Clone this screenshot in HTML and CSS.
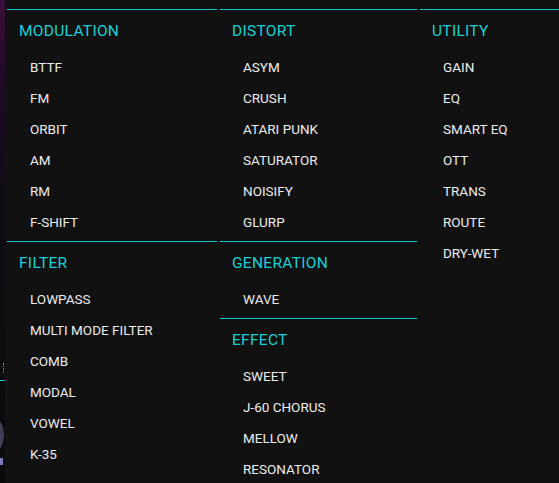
FILE: index.html
```html
<!DOCTYPE html>
<html>

<head>
  <meta http-equiv="Content-Type" content="text/html; charset=UTF-8">
  <title>Effect menu</title>
  <link rel="stylesheet" href="styles.css">
</head>

<body>

  <div id="app">

    <!-- trozo de la ventana de fondo -->
    <div id="fondo">
      <span class="puntos"></span>
      <span class="raya"></span>
      <span class="knob"></span>
      <span class="marca"></span>
    </div>

    <div id="menu">

      <div class="columna">
        <div class="seccion">
          <div class="titulo">MODULATION</div>
          <div class="item">BTTF</div>
          <div class="item">FM</div>
          <div class="item">ORBIT</div>
          <div class="item">AM</div>
          <div class="item">RM</div>
          <div class="item">F-SHIFT</div>
        </div>
        <div class="seccion">
          <div class="titulo">FILTER</div>
          <div class="item">LOWPASS</div>
          <div class="item">MULTI MODE FILTER</div>
          <div class="item">COMB</div>
          <div class="item">MODAL</div>
          <div class="item">VOWEL</div>
          <div class="item">K-35</div>
        </div>
      </div>

      <div class="columna">
        <div class="seccion">
          <div class="titulo">DISTORT</div>
          <div class="item">ASYM</div>
          <div class="item">CRUSH</div>
          <div class="item">ATARI PUNK</div>
          <div class="item">SATURATOR</div>
          <div class="item">NOISIFY</div>
          <div class="item">GLURP</div>
        </div>
        <div class="seccion">
          <div class="titulo">GENERATION</div>
          <div class="item">WAVE</div>
        </div>
        <div class="seccion">
          <div class="titulo">EFFECT</div>
          <div class="item">SWEET</div>
          <div class="item">J-60 CHORUS</div>
          <div class="item">MELLOW</div>
          <div class="item">RESONATOR</div>
        </div>
      </div>

      <div class="columna">
        <div class="seccion">
          <div class="titulo">UTILITY</div>
          <div class="item">GAIN</div>
          <div class="item">EQ</div>
          <div class="item">SMART EQ</div>
          <div class="item">OTT</div>
          <div class="item">TRANS</div>
          <div class="item">ROUTE</div>
          <div class="item">DRY-WET</div>
        </div>
      </div>

    </div>
  </div>

</body>

</html>
```

FILE: styles.css
```css
body {
  margin: 0;
  background: #111111;
  font-family: Roboto, "Liberation Sans", sans-serif;
  overflow: hidden;
}

#app {
  display: flex;
  height: 483px;
}

#fondo {
  position: relative;
  width: 5px;
  flex-shrink: 0;
  overflow: hidden;
  background: linear-gradient(180deg, #3a0f3a 0%, #1c0a24 20%, #0c0c10 45%, #0a0a0c 100%);
}

/* detalles de la ventana que queda detras */
#fondo .puntos {
  position: absolute;
  left: 3px;
  top: 363px;
  width: 1px;
  height: 10px;
  border-left: 1px dotted #1fc8cf;
}

#fondo .raya {
  position: absolute;
  left: 0;
  top: 380px;
  width: 5px;
  height: 1px;
  background: #1fc8cf;
}

#fondo .knob {
  position: absolute;
  left: -10px;
  top: 420px;
  width: 14px;
  height: 30px;
  border-radius: 50%;
  background: #3e3e54;
}

#fondo .marca {
  position: absolute;
  left: 0;
  top: 458px;
  width: 3px;
  height: 7px;
  background: #7f7ab8;
}

#menu {
  flex: 1;
  display: grid;
  grid-template-columns: 210px 197px 1fr;
  column-gap: 3px;
  align-items: start;
  padding: 9px 0 0 2px;
}

.seccion {
  border-top: 1px solid #18ccd6;
  padding-bottom: 4px;
}

.titulo {
  height: 41px;
  line-height: 42px;
  padding-left: 12px;
  font-size: 15.5px;
  color: #1ccfd6;
  letter-spacing: 0.3px;
}

.item {
  height: 31px;
  line-height: 32px;
  padding-left: 23px;
  font-size: 13.5px;
  color: #ececec;
}
```
